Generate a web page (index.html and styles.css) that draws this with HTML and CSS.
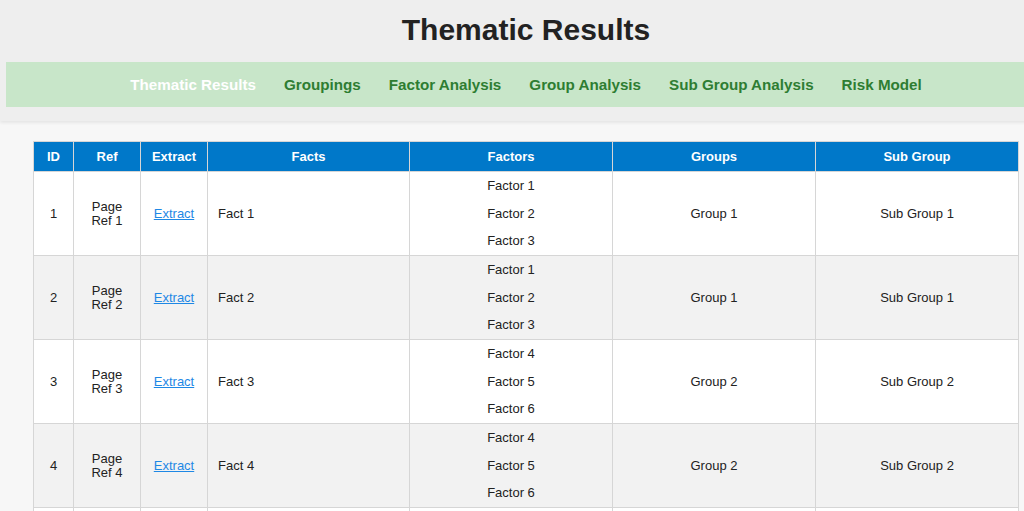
FILE: index.html
```html
<!DOCTYPE html>
<html>
<head>
<meta charset="utf-8">
<title>Thematic Results</title>
<link rel="stylesheet" href="styles.css">
</head>
<body>
<div class="page">
  <header class="top">
    <h1 class="title">Thematic Results</h1>
    <nav class="nav">
      <a class="nav-link active" href="#">Thematic Results</a>
      <a class="nav-link" href="#">Groupings</a>
      <a class="nav-link" href="#">Factor Analysis</a>
      <a class="nav-link" href="#">Group Analysis</a>
      <a class="nav-link" href="#">Sub Group Analysis</a>
      <a class="nav-link" href="#">Risk Model</a>
    </nav>
  </header>
  <main class="content">
    <table class="results">
      <colgroup>
        <col class="c-id"><col class="c-ref"><col class="c-ext"><col class="c-facts"><col class="c-wide"><col class="c-wide"><col class="c-wide">
      </colgroup>
      <thead>
        <tr><th>ID</th><th>Ref</th><th>Extract</th><th>Facts</th><th>Factors</th><th>Groups</th><th>Sub Group</th></tr>
      </thead>
      <tbody>
        <tr>
          <td>1</td><td>Page Ref 1</td><td><a class="link" href="#">Extract</a></td><td class="left">Fact 1</td>
          <td><div class="factor">Factor 1</div><div class="factor">Factor 2</div><div class="factor">Factor 3</div></td>
          <td>Group 1</td><td>Sub Group 1</td>
        </tr>
        <tr>
          <td>2</td><td>Page Ref 2</td><td><a class="link" href="#">Extract</a></td><td class="left">Fact 2</td>
          <td><div class="factor">Factor 1</div><div class="factor">Factor 2</div><div class="factor">Factor 3</div></td>
          <td>Group 1</td><td>Sub Group 1</td>
        </tr>
        <tr>
          <td>3</td><td>Page Ref 3</td><td><a class="link" href="#">Extract</a></td><td class="left">Fact 3</td>
          <td><div class="factor">Factor 4</div><div class="factor">Factor 5</div><div class="factor">Factor 6</div></td>
          <td>Group 2</td><td>Sub Group 2</td>
        </tr>
        <tr>
          <td>4</td><td>Page Ref 4</td><td><a class="link" href="#">Extract</a></td><td class="left">Fact 4</td>
          <td><div class="factor">Factor 4</div><div class="factor">Factor 5</div><div class="factor">Factor 6</div></td>
          <td>Group 2</td><td>Sub Group 2</td>
        </tr>
        <tr class="tail">
          <td></td><td></td><td></td><td class="left"></td><td></td><td></td><td></td>
        </tr>
      </tbody>
    </table>
  </main>
</div>
</body>
</html>
```
FILE: styles.css
```css
html, body {
  margin: 0;
  padding: 0;
  overflow: hidden;
  background: #f7f7f7;
}
body {
  font-family: "Liberation Sans", Arial, sans-serif;
  color: #222;
}
.page {
  width: 1052px;
}
.top {
  background: #eeeeee;
  padding: 13px 0 14px;
  box-shadow: 0 2px 3px rgba(0, 0, 0, 0.07);
  position: relative;
}
.title {
  margin: 0 0 15px;
  text-align: center;
  font-size: 30px;
  font-weight: bold;
  line-height: 34px;
  color: #222;
}
.nav {
  margin: 0 6px;
  height: 45px;
  background: #c8e6c9;
  display: flex;
  justify-content: center;
  align-items: center;
}
.nav-link {
  padding: 0 14px;
  font-size: 15.2px;
  font-weight: bold;
  color: #2e7d32;
  text-decoration: none;
}
.nav-link.active {
  color: #ffffff;
}
.content {
  padding: 20px 33px 20px;
}
.results {
  width: 985px;
  border-collapse: collapse;
  table-layout: fixed;
  font-size: 13px;
  background: #fff;
}
.c-id { width: 40px; }
.c-ref { width: 67px; }
.c-ext { width: 67px; }
.c-facts { width: 202px; }
.c-wide { width: 203px; }
.results th {
  background: #0078c9;
  color: #fff;
  font-weight: bold;
  height: 29px;
  padding: 0 10px;
  border: 1px solid #d6d6d6;
  text-align: center;
  line-height: 15px;
}
.results td {
  border: 1px solid #d6d6d6;
  padding: 0 10px;
  text-align: center;
  vertical-align: middle;
  line-height: 14px;
  height: 83px;
  color: #222;
}
.results tbody tr:nth-child(even) td {
  background: #f2f2f2;
}
.results td.left {
  text-align: left;
}
.factor {
  line-height: 27.67px;
}
.link {
  color: #1e88e5;
  text-decoration: underline;
}
```
